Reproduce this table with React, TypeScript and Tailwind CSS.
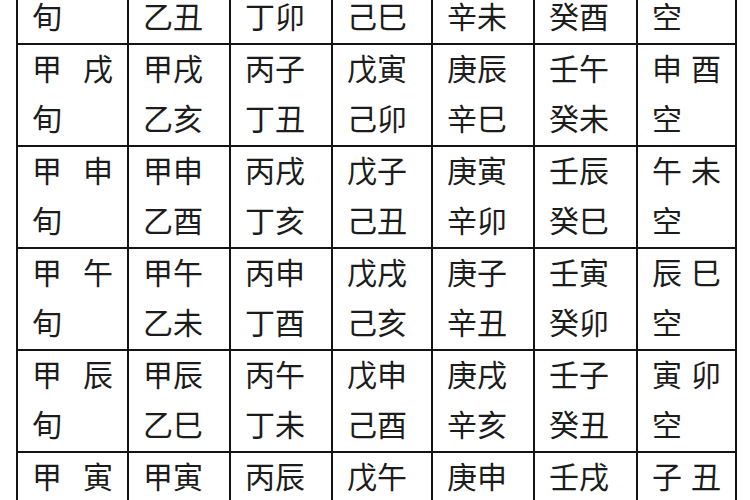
const rows = [
  { xun: '子', pairs: ['甲子乙丑', '丙寅丁卯', '戊辰己巳', '庚午辛未', '壬申癸酉'], kong: ['戌', '亥'] },
  { xun: '戌', pairs: ['甲戌乙亥', '丙子丁丑', '戊寅己卯', '庚辰辛巳', '壬午癸未'], kong: ['申', '酉'] },
  { xun: '申', pairs: ['甲申乙酉', '丙戌丁亥', '戊子己丑', '庚寅辛卯', '壬辰癸巳'], kong: ['午', '未'] },
  { xun: '午', pairs: ['甲午乙未', '丙申丁酉', '戊戌己亥', '庚子辛丑', '壬寅癸卯'], kong: ['辰', '巳'] },
  { xun: '辰', pairs: ['甲辰乙巳', '丙午丁未', '戊申己酉', '庚戌辛亥', '壬子癸丑'], kong: ['寅', '卯'] },
  { xun: '寅', pairs: ['甲寅乙卯', '丙辰丁巳', '戊午己未', '庚申辛酉', '壬戌癸亥'], kong: ['子', '丑'] },
];

const cell = 'h-[102px] border-r-2 border-b-2 border-[#141414] pl-[14px] flex flex-col';

export default function App() {
  return (
    <div
      className="w-[750px] h-[500px] overflow-hidden bg-white text-[#1c1c1c]"
      style={{ fontFamily: '"Noto Sans CJK SC", "Noto Sans", sans-serif' }}
    >
      <div className="ml-[16px] -mt-[57px] w-[721px] border-l-2 border-[#141414] grid grid-cols-[111px_102px_102px_100px_102px_103px_99px] text-[30px] leading-[50px]">
        {rows.map((r) => (
          <div key={r.xun} className="contents">
            {/* 旬 */}
            <div className={cell}>
              <div className="-mt-[3px] flex gap-[21px]">
                <span>甲</span>
                <span>{r.xun}</span>
              </div>
              <div>旬</div>
            </div>
            {r.pairs.map((p) => (
              <div key={p} className={cell}>
                <div className="-mt-[3px]">{p.slice(0, 2)}</div>
                <div>{p.slice(2)}</div>
              </div>
            ))}
            {/* 空亡 */}
            <div className={cell}>
              <div className="-mt-[3px] flex gap-[9px]">
                <span>{r.kong[0]}</span>
                <span>{r.kong[1]}</span>
              </div>
              <div>空</div>
            </div>
          </div>
        ))}
      </div>
    </div>
  );
}
